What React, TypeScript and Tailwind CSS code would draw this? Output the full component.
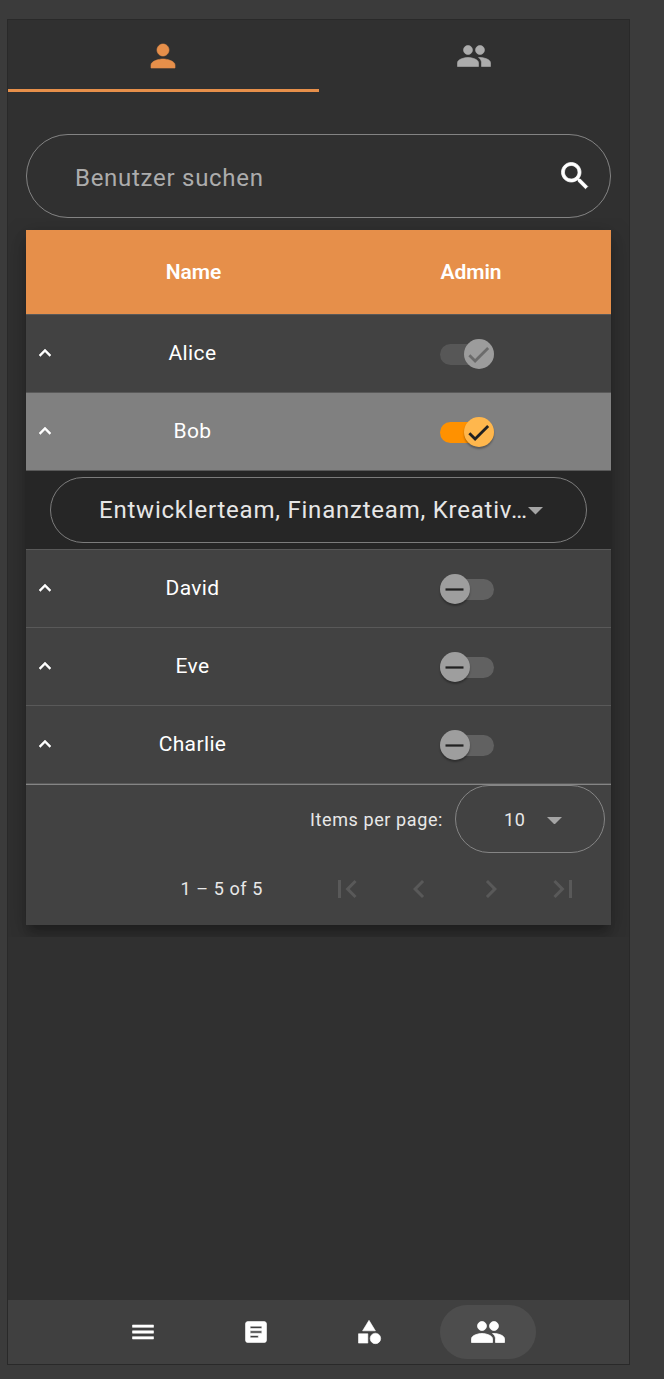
import React from "react";

const ICONS = {
  person:
    "M12 12c2.21 0 4-1.79 4-4s-1.79-4-4-4-4 1.79-4 4 1.79 4 4 4zm0 2c-2.67 0-8 1.34-8 4v2h16v-2c0-2.66-5.33-4-8-4z",
  group:
    "M16 11c1.66 0 2.99-1.34 2.99-3S17.66 5 16 5c-1.66 0-3 1.34-3 3s1.34 3 3 3zm-8 0c1.66 0 2.99-1.34 2.99-3S9.66 5 8 5C6.34 5 5 6.34 5 8s1.34 3 3 3zm0 2c-2.33 0-7 1.17-7 3.5V19h14v-2.5c0-2.33-4.67-3.5-7-3.5zm8 0c-.29 0-.62.02-.97.05 1.16.84 1.97 1.97 1.97 3.45V19h6v-2.5c0-2.33-4.67-3.5-7-3.5z",
  search:
    "M15.5 14h-.79l-.28-.27C15.41 12.59 16 11.11 16 9.5 16 5.91 13.09 3 9.5 3S3 5.91 3 9.5 5.91 16 9.5 16c1.61 0 3.09-.59 4.23-1.57l.27.28v.79l5 4.99L20.49 19l-4.99-5zm-6 0C7.01 14 5 11.99 5 9.5S7.01 5 9.5 5 14 7.01 14 9.5 11.99 14 9.5 14z",
  up: "M12 8l-6 6 1.41 1.41L12 10.83l4.59 4.58L18 14z",
  check: "M19.69 5.23L8.96 15.96l-4.23-4.23L2.96 13.5l6 6L21.46 7z",
  minus: "M20 13H4v-2h16v2z",
  first: "M18.41 16.59L13.82 12l4.59-4.59L17 6l-6 6 6 6zM6 6h2v12H6z",
  prev: "M15.41 7.41L14 6l-6 6 6 6 1.41-1.41L10.83 12z",
  next: "M10 6L8.59 7.41 13.17 12l-4.58 4.59L10 18l6-6z",
  last: "M5.59 7.41L10.18 12l-4.59 4.59L7 18l6-6-6-6zM16 6h2v12h-2z",
  menu: "M3 18h18v-2H3v2zm0-5h18v-2H3v2zm0-7v2h18V6H3z",
  article:
    "M19 3H5c-1.1 0-2 .9-2 2v14c0 1.1.9 2 2 2h14c1.1 0 2-.9 2-2V5c0-1.1-.9-2-2-2zm-5 14H7v-2h7v2zm3-4H7v-2h10v2zm0-4H7V7h10v2z",
  category:
    "M12 2l-5.5 9h11zM17.5 13a4.5 4.5 0 1 0 0 9 4.5 4.5 0 0 0 0-9zM3 13.5h8v8H3z",
};

function Icon({ name, className }: { name: keyof typeof ICONS; className: string }) {
  return (
    <svg viewBox="0 0 24 24" fill="currentColor" className={`block shrink-0 ${className}`} aria-hidden="true">
      <path d={ICONS[name]} />
    </svg>
  );
}

function Arrow({ className = "" }: { className?: string }) {
  return (
    <svg viewBox="0 0 15 7.5" className={`block h-[7.5px] w-[15px] shrink-0 fill-[#a5a5a5] ${className}`} aria-hidden="true">
      <path d="M0 0h15L7.5 7.5z" />
    </svg>
  );
}

type SwitchState = "on" | "off" | "locked";

const TRACK: Record<SwitchState, string> = {
  on: "bg-[#ff9100] justify-end",
  off: "bg-[#616161] justify-start",
  locked: "bg-[#575757] justify-end",
};
const THUMB: Record<SwitchState, string> = {
  on: "bg-[#ffb74d] text-[#212121] shadow-[0_2px_2px_rgba(0,0,0,0.3)]",
  off: "bg-[#9e9e9e] text-[#212121] shadow-[0_2px_2px_rgba(0,0,0,0.3)]",
  locked: "bg-[#9c9c9c] text-[#6b6b6b]",
};

function Switch({ state }: { state: SwitchState }) {
  return (
    <div className={`mt-px flex h-[21px] w-[54px] items-center rounded-full ${TRACK[state]}`}>
      <div className={`flex size-[30px] shrink-0 items-center justify-start rounded-full pl-px ${THUMB[state]}`}>
        <Icon name={state === "off" ? "minus" : "check"} className="size-[27px]" />
      </div>
    </div>
  );
}

function Row({ name, state, className = "" }: { name: string; state: SwitchState; className?: string }) {
  return (
    <div
      className={`grid h-[78px] grid-cols-[36px_261px_288px] items-center border-b border-[#595959] ${className}`}
    >
      <Icon name="up" className="mb-0.5 ml-[7px] size-6 stroke-current stroke-[0.5]" />
      <span className="pb-0.5 text-center text-[21px] leading-8 tracking-[0.375px]">{name}</span>
      <div className="flex justify-center">
        <Switch state={state} />
      </div>
    </div>
  );
}

export default function App() {
  return (
    <div className="h-[1379px] w-[664px] bg-[#3b3b3b] pt-[19px] pl-[7px] font-[Roboto,sans-serif] text-white">
      <div className="flex h-[1346px] w-[623px] flex-col border border-[#292929] bg-[#303030]">
        <div className="grid h-[72px] shrink-0 grid-cols-2">
          <div className="flex justify-center border-b-3 border-[#e68f4a] pt-[18px] text-[#e68f4a]">
            <Icon name="person" className="size-9 stroke-current stroke-[0.4]" />
          </div>
          <div className="flex justify-center pt-[18px] text-[#acacac]">
            <Icon name="group" className="size-9 stroke-current stroke-[0.4]" />
          </div>
        </div>

        <div className="flex flex-1 flex-col px-[18px] pt-[42px]">
          <div className="flex h-[84px] items-center justify-between rounded-full border border-[#838383] pr-[17px] pl-12">
            <span className="mt-[3px] text-2xl tracking-[0.72px] text-[#acacac]">Benutzer suchen</span>
            <Icon name="search" className="size-9 stroke-current stroke-[0.5]" />
          </div>

          <div className="-mx-[18px] h-[719px] overflow-hidden px-[18px] pt-3">
            <div className="h-[695px] bg-[#424242] shadow-[0_8px_8px_-4px_rgba(0,0,0,0.2),0_12px_15px_1px_rgba(0,0,0,0.14),0_4px_21px_3px_rgba(0,0,0,0.12)]">
              <div className="grid h-[85px] grid-cols-[36px_261px_288px] items-center border-b border-[#595959] bg-[#e68f4a] pt-0.5 text-center text-[21px] font-semibold tracking-[-0.1px]">
                <span />
                <span className="pl-0.5">Name</span>
                <span className="pl-2">Admin</span>
              </div>
              <Row name="Alice" state="locked" />
              <Row name="Bob" state="on" className="bg-[#808080]" />
              <div className="h-[79px] border-b border-[#595959] bg-[#262626] px-6 pt-1.5">
                <div className="flex h-[66px] items-center rounded-full border border-[#7c7c7c] pl-12">
                  <span className="w-[429px] whitespace-nowrap text-2xl tracking-[0.78px] text-[#e6e6e6]">
                    Entwicklerteam, Finanzteam, Kreativ…
                  </span>
                  <Arrow className="mt-0.5" />
                </div>
              </div>
              <Row name="David" state="off" />
              <Row name="Eve" state="off" />
              <Row name="Charlie" state="off" />

              <div className="border-t border-[#858585] text-[18px] tracking-[0.6px] text-[#e8e8e8]">
                <div className="flex h-[68px] items-center justify-end pr-1.5">
                  <span className="mr-3">Items per page:</span>
                  <div className="flex h-[68px] w-[150px] items-center justify-between rounded-full border border-[#858585] pr-[42px] pl-12">
                    <span>10</span>
                    <Arrow className="mt-[3px]" />
                  </div>
                </div>
                <div className="flex h-[72px] items-center justify-end pr-3">
                  <span className="mr-12 pb-0.5">1 – 5 of 5</span>
                  <div className="flex text-[#595959]">
                    {(["first", "prev", "next", "last"] as const).map((name) => (
                      <button key={name} disabled className="flex w-[72px] justify-center">
                        <Icon name={name} className="size-9" />
                      </button>
                    ))}
                  </div>
                </div>
              </div>
            </div>
          </div>
        </div>

        <nav className="flex h-16 shrink-0 items-center justify-center gap-[29px] bg-[#404040]">
          {(["menu", "article", "category"] as const).map((name) => (
            <div key={name} className="flex w-[84px] justify-center">
              <Icon name={name} className="size-[28px] stroke-current stroke-[0.5]" />
            </div>
          ))}
          <div className="flex h-[54px] w-24 items-center justify-center rounded-full bg-[#4d4d4d]">
            <Icon name="group" className="size-9 stroke-current stroke-[0.5]" />
          </div>
        </nav>
      </div>
    </div>
  );
}
